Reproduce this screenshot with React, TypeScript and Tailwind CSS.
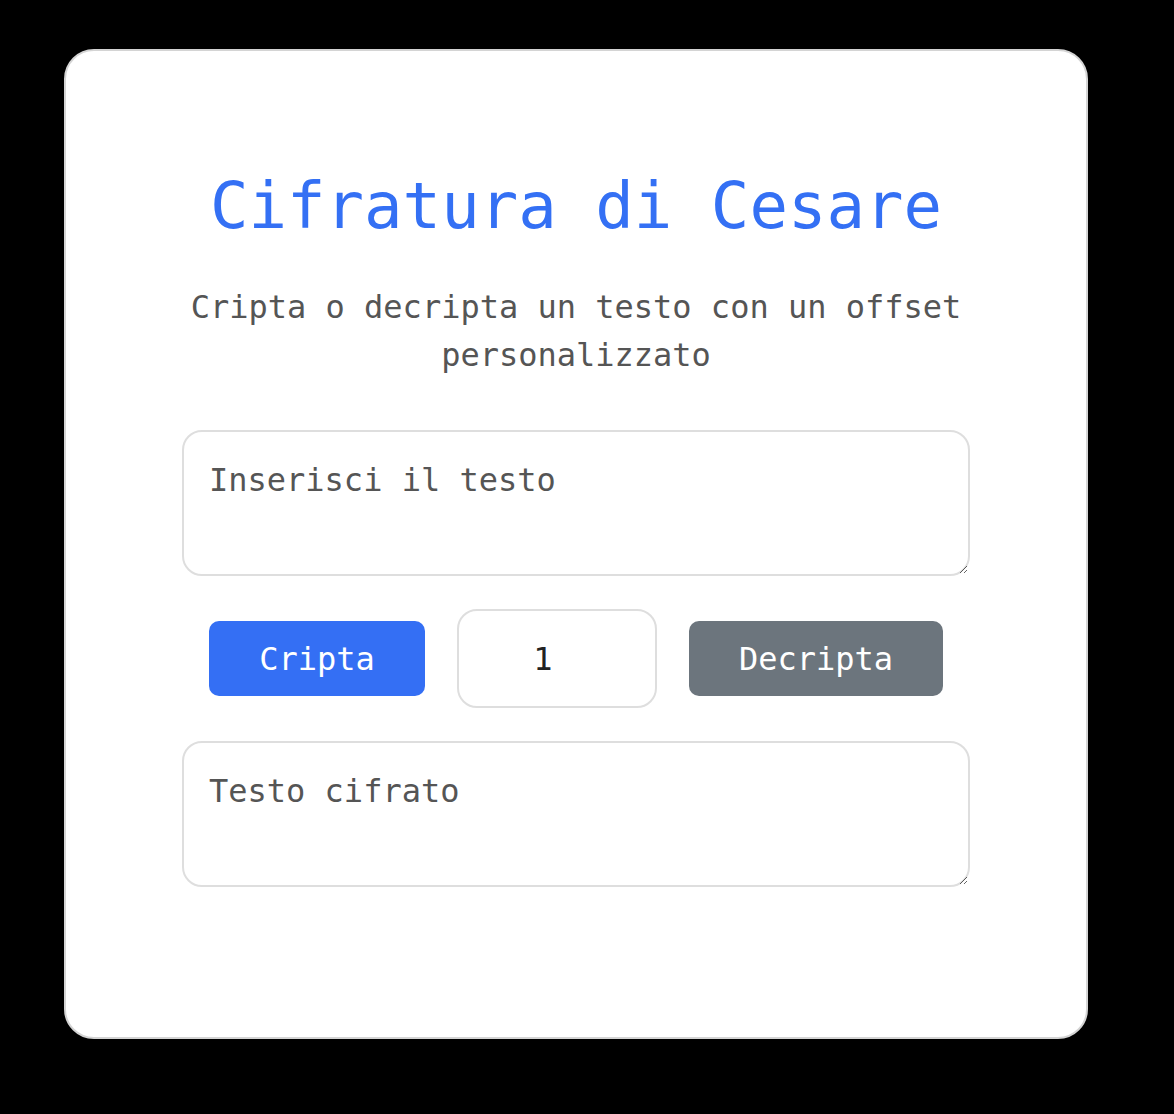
import React from "react";

export default function App() {
  return (
    <div
      className="min-h-[1114px] w-[1174px] bg-black pl-[64px] pt-[49px]"
      style={{ fontFamily: '"DejaVu Sans Mono", monospace' }}
    >
      <div className="flex h-[990px] w-[1024px] flex-col items-center rounded-[30px] border-2 border-[#d4d4d4] bg-white pt-[118px]">
        <h1 className="text-[64px] font-normal leading-[74px] text-[#3470f4]">
          Cifratura di Cesare
        </h1>
        <p className="mt-[40px] w-[788px] text-center text-[32px] leading-[48px] text-[#555555]">
          Cripta o decripta un testo con un offset personalizzato
        </p>
        <textarea
          className="mt-[51px] h-[146px] w-[788px] rounded-[20px] border-2 border-[#dedede] bg-white px-[25px] pt-[24px] text-[32px] leading-[48px] text-[#222] outline-none placeholder:text-[#555555]"
          placeholder="Inserisci il testo"
        />
        <div className="mt-[33px] flex items-center gap-[32px]">
          <button className="h-[75px] w-[216px] rounded-[10px] bg-[#346ff4] text-[32px] leading-[48px] text-white">
            Cripta
          </button>
          <input
            type="text"
            defaultValue="1"
            className="h-[99px] w-[200px] rounded-[20px] border-2 border-[#dedede] bg-white pl-[10px] pr-[38px] text-center text-[32px] text-[#222] outline-none"
          />
          <button className="h-[75px] w-[254px] rounded-[10px] bg-[#6c757d] text-[32px] leading-[48px] text-white">
            Decripta
          </button>
        </div>
        <textarea
          className="mt-[33px] h-[146px] w-[788px] rounded-[20px] border-2 border-[#dedede] bg-white px-[25px] pt-[24px] text-[32px] leading-[48px] text-[#222] outline-none placeholder:text-[#555555]"
          placeholder="Testo cifrato"
        />
      </div>
    </div>
  );
}
